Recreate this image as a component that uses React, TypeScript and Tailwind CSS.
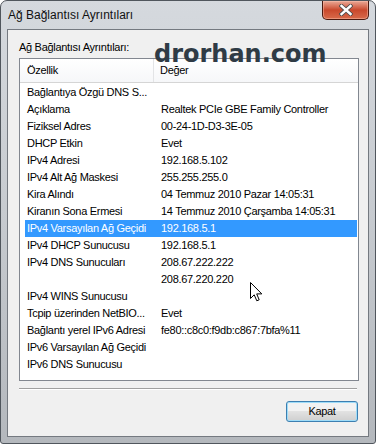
import React from 'react';

type Row = {
  name: string;
  value: string;
  selected?: boolean;
};

const rows: Row[] = [
  { name: 'Bağlantıya Özgü DNS S...', value: '' },
  { name: 'Açıklama', value: 'Realtek PCIe GBE Family Controller' },
  { name: 'Fiziksel Adres', value: '00-24-1D-D3-3E-05' },
  { name: 'DHCP Etkin', value: 'Evet' },
  { name: 'IPv4 Adresi', value: '192.168.5.102' },
  { name: 'IPv4 Alt Ağ Maskesi', value: '255.255.255.0' },
  { name: 'Kira Alındı', value: '04 Temmuz 2010 Pazar 14:05:31' },
  { name: 'Kiranın Sona Ermesi', value: '14 Temmuz 2010 Çarşamba 14:05:31' },
  { name: 'IPv4 Varsayılan Ağ Geçidi', value: '192.168.5.1', selected: true },
  { name: 'IPv4 DHCP Sunucusu', value: '192.168.5.1' },
  { name: 'IPv4 DNS Sunucuları', value: '208.67.222.222' },
  { name: '', value: '208.67.220.220' },
  { name: 'IPv4 WINS Sunucusu', value: '' },
  { name: 'Tcpip üzerinden NetBIO...', value: 'Evet' },
  { name: 'Bağlantı yerel IPv6 Adresi', value: 'fe80::c8c0:f9db:c867:7bfa%11' },
  { name: 'IPv6 Varsayılan Ağ Geçidi', value: '' },
  { name: 'IPv6 DNS Sunucusu', value: '' },
];

const CloseButton: React.FC = () => (
  <div className="w-[47px] h-[19px] mr-[6px] self-start rounded-b-[5px] border border-t-0 border-[#4a1a10] bg-gradient-to-b from-[#e9a896] via-[#c9482c] to-[#d86a4a] flex items-center justify-center shadow-[inset_0_0_0_1px_rgba(255,200,180,0.45)]">
    <svg width="14" height="12" viewBox="0 0 14 12">
      <path d="M2.5 2 L11.5 10 M11.5 2 L2.5 10" stroke="#4b4b4b" strokeWidth="4.2" strokeLinecap="square" />
      <path d="M2.5 2 L11.5 10 M11.5 2 L2.5 10" stroke="#ffffff" strokeWidth="2.4" strokeLinecap="square" />
    </svg>
  </div>
);

const Cursor: React.FC = () => (
  <svg className="absolute left-[250px] top-[282px]" width="13" height="20" viewBox="0 0 13 20">
    <path
      d="M0.5 0.5 L0.5 16.5 L4.2 12.8 L6.8 18.8 L9.2 17.8 L6.7 11.9 L11.8 11.9 Z"
      fill="#ffffff"
      stroke="#000000"
      strokeWidth="1"
      strokeLinejoin="miter"
    />
  </svg>
);

export default function App() {
  return (
    <div className="relative w-[376px] h-[444px] bg-white font-['Liberation_Sans',Arial,sans-serif] text-black">
      <div className="w-[376px] h-[444px] flex flex-col rounded-t-[7px] rounded-b-[3px] border border-[#50565d] bg-gradient-to-b from-[#d5d9de] via-[#c6cacf] to-[#b4b8bd]">
        {/* title bar */}
        <div className="h-[28px] flex justify-between">
          <div className="pl-[7px] pt-[7px] text-[12px] leading-[14px] text-[#111]">Ağ Bağlantısı Ayrıntıları</div>
          <CloseButton />
        </div>

        {/* client area */}
        <div className="mx-[6px] mb-[6px] h-[408px] border border-[#747980] bg-[#f0f0f0] flex flex-col text-[11px] tracking-[-0.3px]">
          <div className="pl-[11px] pt-[11px] h-[24px] leading-[13px]">Ağ Bağlantısı Ayrıntıları:</div>

          <div className="ml-[11px] mt-[4px] w-[340px] h-[323px] border border-[#828790] bg-white flex flex-col">
            <div className="h-[24px] flex border-b border-[#d5d5d5] bg-gradient-to-b from-white to-[#f6f7f9]">
              <div className="w-[134px] pl-[7px] flex items-center border-r border-[#e3e4e6]">Özellik</div>
              <div className="pl-[6px] flex items-center">Değer</div>
            </div>
            <div className="mt-[1px] flex flex-col">
              {rows.map((r, i) => (
                <div
                  key={i}
                  className={
                    r.selected
                      ? 'ml-[5px] mr-[1px] h-[17px] flex items-center bg-[#3399ff] text-white'
                      : 'ml-[5px] mr-[1px] h-[17px] flex items-center'
                  }
                >
                  <div className="w-[136px] pl-[2px] whitespace-nowrap overflow-hidden">{r.name}</div>
                  <div className="whitespace-nowrap">{r.value}</div>
                </div>
              ))}
            </div>
          </div>

          <div className="ml-[11px] mt-[7px] w-[338px] h-[2px] border-t border-[#a0a0a0] border-b border-b-white" />

          <div className="flex justify-end pr-[10px] mt-[11px]">
            <button className="w-[72px] h-[21px] rounded-[3px] border border-[#3c7fb1] bg-gradient-to-b from-[#f2f2f2] from-50% via-[#e2e2e2] via-50% to-[#cfcfcf] shadow-[inset_0_0_0_1px_#9fdcf8] text-[11px] leading-[13px] text-black">
              Kapat
            </button>
          </div>
        </div>
      </div>

      {/* watermark */}
      <div className="absolute left-[154px] top-[45px] font-['DejaVu_Sans',Verdana,sans-serif] font-bold text-[24px] leading-[18px] tracking-normal text-[#2f3b45]">
        drorhan.com
      </div>

      <Cursor />
    </div>
  );
}
